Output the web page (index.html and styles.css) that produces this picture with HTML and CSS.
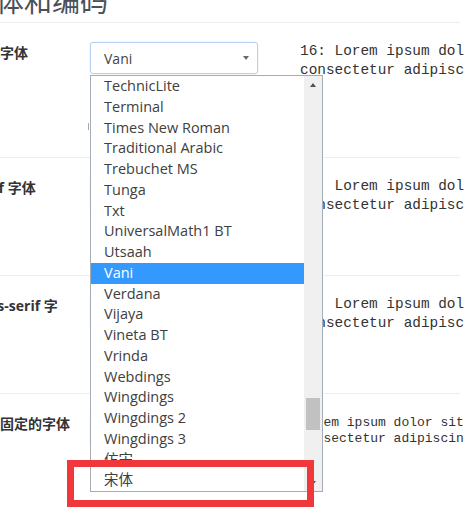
FILE: index.html
```html
<!DOCTYPE html>
<html lang="zh-CN">
<head>
  <meta charset="UTF-8">
  <meta name="viewport" content="width=device-width, initial-scale=1.0">
  <title>字体和编码</title>
  <link rel="stylesheet" href="styles.css">
</head>
<body>
  <div class="settings">
    <h1 class="settings-title">字体和编码</h1>

    <!-- Standard font -->
    <div class="font-row font-row-standard">
      <div class="font-label">标准字体</div>
      <div class="font-control">
        <div class="font-select">Vani<span class="select-arrow"></span></div>
        <div class="size-slider"></div>
      </div>
      <div class="font-sample">16: Lorem ipsum dolor sit amet,<br>consectetur adipiscing elit.</div>
    </div>

    <!-- Serif font -->
    <div class="font-row">
      <div class="font-label">Serif 字体</div>
      <div class="font-control">
        <div class="font-select">Times New Roman<span class="select-arrow"></span></div>
      </div>
      <div class="font-sample">16: Lorem ipsum dolor sit amet,<br>consectetur adipiscing elit.</div>
    </div>

    <!-- Sans-serif font -->
    <div class="font-row">
      <div class="font-label">Sans-serif 字体</div>
      <div class="font-control">
        <div class="font-select">Arial<span class="select-arrow"></span></div>
      </div>
      <div class="font-sample">16: Lorem ipsum dolor sit amet,<br>consectetur adipiscing elit.</div>
    </div>

    <!-- Fixed width font -->
    <div class="font-row font-row-last">
      <div class="font-label">宽度固定的字体</div>
      <div class="font-control">
        <div class="font-select">宋体<span class="select-arrow"></span></div>
      </div>
      <div class="font-sample sample-small">Lorem ipsum dolor sit amet,<br>consectetur adipiscing elit.</div>
    </div>
  </div>

  <!-- Open list of the standard font select -->
  <div class="dropdown">
    <ul class="dropdown-list">
      <li>TechnicLite</li>
      <li>Terminal</li>
      <li>Times New Roman</li>
      <li>Traditional Arabic</li>
      <li>Trebuchet MS</li>
      <li>Tunga</li>
      <li>Txt</li>
      <li>UniversalMath1 BT</li>
      <li>Utsaah</li>
      <li class="selected">Vani</li>
      <li>Verdana</li>
      <li>Vijaya</li>
      <li>Vineta BT</li>
      <li>Vrinda</li>
      <li>Webdings</li>
      <li>Wingdings</li>
      <li>Wingdings 2</li>
      <li>Wingdings 3</li>
      <li>仿宋</li>
      <li>宋体</li>
    </ul>
    <div class="dropdown-scrollbar">
      <span class="scroll-btn"><span class="arrow-up"></span></span>
      <span class="scroll-track"><span class="scroll-thumb"></span></span>
      <span class="scroll-btn"><span class="arrow-down"></span></span>
    </div>
  </div>

  <div class="callout"></div>
</body>
</html>
```

FILE: styles.css
```css
:root {
  --text: #333;
  --muted: #4c4f58;
  --line: #eeeeee;
  --select-border: #b5cfee;
  --list-border: #a6acb6;
  --highlight: #3399ff;
  --callout: #f0383c;
}
body {
  margin: 0;
  background: #fff;
  color: var(--text);
  font-family: "Open Sans", "Noto Sans CJK SC", sans-serif;
  overflow: hidden;
  height: 510px;
}
.settings {
  margin-left: -28px;
  width: 488px;
}
.settings-title {
  margin: -15px 0 0 -4px;
  padding-bottom: 7px;
  font-size: 28px;
  line-height: 30px;
  font-weight: normal;
  color: var(--muted);
  font-family: "Noto Sans CJK SC", sans-serif;
  border-bottom: 1px solid var(--line);
}
.font-row {
  display: grid;
  grid-template-columns: 99px 168px 1fr;
  column-gap: 19px;
  padding-top: 19px;
  height: 98px;
  border-bottom: 1px solid var(--line);
}
.font-row-standard {
  height: 115px;
}
.font-row-last {
  border-bottom: none;
}
.font-label {
  font-size: 14px;
  font-weight: bold;
  line-height: 22px;
  color: #333;
}
.font-control {
  display: flex;
  flex-direction: column;
}
.font-select {
  box-sizing: border-box;
  height: 32px;
  border: 1px solid var(--select-border);
  border-radius: 3px;
  padding: 0 8px 0 13px;
  display: flex;
  align-items: center;
  justify-content: space-between;
  font-size: 14px;
  color: #444;
  box-shadow: 0 0 2px rgba(120, 170, 230, 0.25);
}
.select-arrow {
  width: 0;
  height: 0;
  border-left: 3px solid transparent;
  border-right: 3px solid transparent;
  border-top: 4px solid #6a6a6a;
}
.size-slider {
  margin: 49px 0 0 -2px;
  width: 1px;
  height: 7px;
  background: #a8a8a8;
}
.font-sample {
  margin-left: 23px;
  font-family: "Liberation Mono", monospace;
  font-size: 14.4px;
  line-height: 19px;
  white-space: nowrap;
  color: #333;
}
.sample-small {
  font-size: 13px;
  line-height: 16px;
  margin-top: 2px;
}

/* open select list */
.dropdown {
  position: absolute;
  left: 90px;
  top: 75px;
  width: 233px;
  height: 417px;
  box-sizing: border-box;
  border: 1px solid var(--list-border);
  background: #fff;
  display: grid;
  grid-template-columns: 1fr 18px;
}
.dropdown-list {
  margin: 0;
  padding: 0;
  list-style: none;
  overflow: hidden;
}
.dropdown-list li {
  height: 20.75px;
  line-height: 20.75px;
  padding-left: 13px;
  font-size: 14.5px;
  color: #404040;
  white-space: nowrap;
}
.dropdown-list li.selected {
  background: var(--highlight);
  color: #fff;
}
.dropdown-scrollbar {
  background: #f0f0f0;
  display: flex;
  flex-direction: column;
}
.scroll-btn {
  height: 17px;
  display: flex;
  align-items: center;
  justify-content: center;
}
.arrow-up, .arrow-down {
  width: 0;
  height: 0;
  border-left: 3px solid transparent;
  border-right: 3px solid transparent;
}
.arrow-up {
  border-bottom: 4px solid #505050;
}
.arrow-down {
  border-top: 4px solid #505050;
}
.scroll-track {
  flex: 1;
}
.scroll-thumb {
  display: block;
  margin: 305px 2px 0;
  height: 32px;
  background: #c1c1c1;
}

/* red highlight box drawn over the list */
.callout {
  position: absolute;
  left: 67px;
  top: 460px;
  width: 247px;
  height: 47px;
  box-sizing: border-box;
  border: 7px solid var(--callout);
}
```
